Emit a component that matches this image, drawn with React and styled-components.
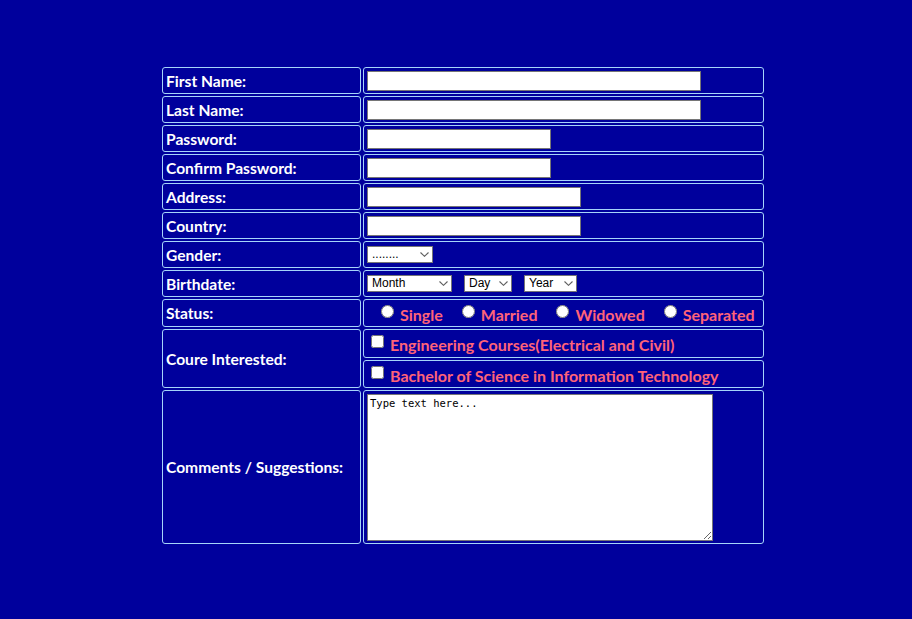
import React from "react";
import styled, { createGlobalStyle } from "styled-components";

const GlobalStyle = createGlobalStyle`
  html, body {
    margin: 0;
    background: #00009c;
  }
  body {
    font-family: Lato, "Liberation Sans", sans-serif;
    color: #ffffff;
  }
`;

const Page = styled.main`
  min-height: 619px;
  box-sizing: border-box;
  padding: 65px 0 0 160px;
`;

const FormTable = styled.table`
  width: 606px;
  table-layout: fixed;
  border-collapse: separate;
  border-spacing: 2px;
`;

const Cell = styled.td`
  box-sizing: border-box;
  height: ${(p) => p.$h || 27}px;
  border: 1px solid #a6d4fa;
  border-radius: 3px;
  padding: 0 3px;
  vertical-align: middle;
`;

const LabelCell = styled(Cell)`
  width: 199px;
  color: #ffffff;
  font-weight: 700;
  font-size: 15.6px;
  white-space: nowrap;
`;

const FieldCell = styled(Cell)`
  width: 401px;
`;

const TextInput = styled.input`
  display: block;
  box-sizing: border-box;
  width: ${(p) => p.$w}px;
  height: 20px;
  margin: 0;
  padding: 1px 2px;
  border: 1px solid #767676;
  border-radius: 0;
  background: #ffffff;
  font: 13px "Liberation Sans", Arial, sans-serif;
`;

const SelectWrap = styled.span`
  position: relative;
  display: block;
  width: ${(p) => p.$w}px;
  height: 17px;
`;

const Select = styled.select`
  appearance: none;
  -webkit-appearance: none;
  display: block;
  box-sizing: border-box;
  width: 100%;
  height: 17px;
  margin: 0;
  padding: 0 14px 0 4px;
  border: 1px solid #767676;
  border-radius: 0;
  background: #ffffff;
  color: #000000;
  font: 12px "Liberation Sans", Arial, sans-serif;
  line-height: 15px;
`;

const Chevron = styled.svg`
  position: absolute;
  right: 4px;
  top: 6px;
  width: 9px;
  height: 5px;
  pointer-events: none;
`;

function Dropdown({ width, children, defaultValue }) {
  return (
    <SelectWrap $w={width}>
      <Select defaultValue={defaultValue}>{children}</Select>
      <Chevron viewBox="0 0 9 5">
        <path d="M0.5 0.5 L4.5 4.3 L8.5 0.5" fill="none" stroke="#5f5f5f" strokeWidth="1.1" />
      </Chevron>
    </SelectWrap>
  );
}

const SelectRow = styled.div`
  display: flex;
  align-items: center;
  gap: 12px;
`;

const StatusCell = styled(FieldCell)`
  vertical-align: top;
  padding-top: 5px;
`;

const RadioGroup = styled.div`
  display: flex;
  align-items: flex-start;
  gap: 19px;
  padding-left: 14px;
`;

const Choice = styled.label`
  display: flex;
  align-items: flex-start;
  color: #ff6378;
  font-weight: 700;
  font-size: 16px;
  line-height: 19px;
  white-space: nowrap;
`;

const Radio = styled.input.attrs({ type: "radio" })`
  width: 13px;
  height: 13px;
  margin: 0 6px 0 0;
`;

const CourseCell = styled(FieldCell)`
  vertical-align: top;
`;

const CourseLabel = styled.label`
  display: flex;
  align-items: flex-start;
  color: #ff6378;
  font-weight: 700;
  font-size: 16px;
  line-height: 19px;
  white-space: nowrap;
`;

const CourseText = styled.span`
  padding-top: 5px;
`;

const Checkbox = styled.input.attrs({ type: "checkbox" })`
  width: 13px;
  height: 13px;
  margin: 5px 6px 0 4px;
`;

const Comments = styled.textarea`
  display: block;
  box-sizing: border-box;
  width: 346px;
  height: 147px;
  margin: 0;
  padding: 2px;
  border: 1px solid #767676;
  border-radius: 0;
  background: #ffffff;
  color: #000000;
  font: 10.5px "DejaVu Sans Mono", "Liberation Mono", monospace;
`;

const textRows = [
  ["First Name:", "text", 334],
  ["Last Name:", "text", 334],
  ["Password:", "password", 184],
  ["Confirm Password:", "password", 184],
  ["Address:", "text", 214],
  ["Country:", "text", 214],
];

const statuses = ["Single", "Married", "Widowed", "Separated"];

export default function App() {
  return (
    <Page>
      <GlobalStyle />
      <FormTable>
        <tbody>
          {textRows.map(([label, type, w]) => (
            <tr key={label}>
              <LabelCell>{label}</LabelCell>
              <FieldCell>
                <TextInput type={type} $w={w} />
              </FieldCell>
            </tr>
          ))}
          <tr>
            <LabelCell>Gender:</LabelCell>
            <FieldCell>
              <Dropdown width={66} defaultValue="">
                <option value="">........</option>
                <option>Male</option>
                <option>Female</option>
              </Dropdown>
            </FieldCell>
          </tr>
          <tr>
            <LabelCell>Birthdate:</LabelCell>
            <FieldCell>
              <SelectRow>
                <Dropdown width={85}>
                  <option>Month</option>
                </Dropdown>
                <Dropdown width={48}>
                  <option>Day</option>
                </Dropdown>
                <Dropdown width={53}>
                  <option>Year</option>
                </Dropdown>
              </SelectRow>
            </FieldCell>
          </tr>
          <tr>
            <LabelCell $h={28}>Status:</LabelCell>
            <StatusCell $h={28}>
              <RadioGroup>
                {statuses.map((s) => (
                  <Choice key={s}>
                    <Radio name="status" />
                    {s}
                  </Choice>
                ))}
              </RadioGroup>
            </StatusCell>
          </tr>
          <tr>
            <LabelCell rowSpan={2}>Coure Interested:</LabelCell>
            <CourseCell $h={29}>
              <CourseLabel>
                <Checkbox />
                <CourseText>Engineering Courses(Electrical and Civil)</CourseText>
              </CourseLabel>
            </CourseCell>
          </tr>
          <tr>
            <CourseCell $h={28}>
              <CourseLabel>
                <Checkbox />
                <CourseText>Bachelor of Science in Information Technology</CourseText>
              </CourseLabel>
            </CourseCell>
          </tr>
          <tr>
            <LabelCell $h={154}>Comments / Suggestions:</LabelCell>
            <FieldCell $h={154}>
              <Comments defaultValue="Type text here..." />
            </FieldCell>
          </tr>
        </tbody>
      </FormTable>
    </Page>
  );
}
